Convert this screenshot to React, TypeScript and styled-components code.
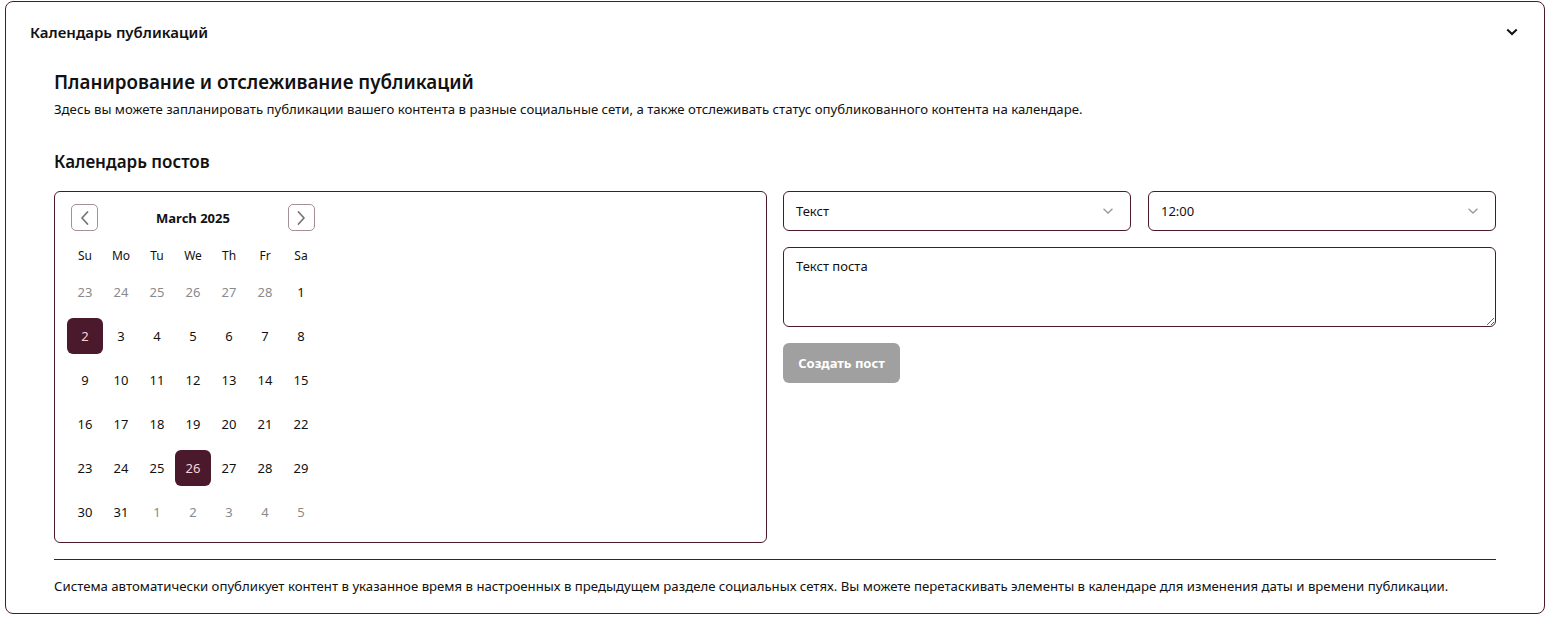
import React from "react";
import styled, { createGlobalStyle } from "styled-components";

const MAROON = "#4a1a2c";

const Global = createGlobalStyle`
  html, body { margin: 0; padding: 0; background: #fff; }
  body { font-family: "Noto Sans", "Open Sans", Arial, sans-serif; color: #111; }
  * { box-sizing: border-box; }
`;

const Page = styled.div`
  padding: 1px 9px 8px 5px;
`;

const Card = styled.section`
  border: 1px solid ${MAROON};
  border-radius: 8px;
  background: #fff;
`;

const CardHeader = styled.header`
  height: 59px;
  display: flex;
  align-items: center;
  justify-content: space-between;
  padding: 0 24px;
`;

const CardTitle = styled.h2`
  margin: 0;
  font-size: 15px;
  font-weight: 600;
  color: #111;
`;

const Toggle = styled.span`
  display: flex;
  align-items: center;
  margin-right: 2px;
  color: #111;
`;

const Body = styled.div`
  padding: 9px 48px 18px;
  display: flex;
  flex-direction: column;
`;

const Title = styled.h1`
  margin: 0;
  font-size: 18.8px;
  line-height: 24px;
  font-weight: 600;
`;

const Lead = styled.p`
  margin: 6px 0 0;
  font-size: 13.2px;
  line-height: 18px;
`;

const SubTitle = styled.h3`
  margin: 33px 0 18px;
  font-size: 17px;
  line-height: 22px;
  font-weight: 600;
`;

const Columns = styled.div`
  display: grid;
  grid-template-columns: 1fr 1fr;
  column-gap: 16px;
  align-items: start;
`;

const CalendarBox = styled.div`
  border: 1px solid ${MAROON};
  border-radius: 6px;
  height: 352px;
  padding: 12px 12px 7px;
`;

const Month = styled.div`
  width: 252px;
`;

const Caption = styled.div`
  display: flex;
  align-items: center;
  justify-content: space-between;
  padding: 0 4px;
  height: 27px;
  margin-bottom: 9px;
`;

const NavButton = styled.button`
  width: 27px;
  height: 27px;
  border: 1px solid #a58f99;
  border-radius: 5px;
  background: #fff;
  display: flex;
  align-items: center;
  justify-content: center;
  padding: 0;
  color: #777;
`;

const MonthLabel = styled.span`
  font-size: 13px;
  font-weight: 700;
  color: #111;
`;

const Grid = styled.div`
  display: grid;
  grid-template-columns: repeat(7, 36px);
`;

const WeekDay = styled.div`
  height: 30px;
  display: flex;
  align-items: center;
  justify-content: center;
  font-size: 12px;
  color: #111;
`;

const DayCell = styled.div`
  height: 44px;
  display: flex;
  align-items: center;
  justify-content: center;
`;

const Day = styled.span<{ $muted?: boolean; $selected?: boolean }>`
  width: 36px;
  height: 36px;
  border-radius: 6px;
  display: flex;
  align-items: center;
  justify-content: center;
  font-size: 13px;
  color: ${(p) => (p.$selected ? "#f4d3df" : p.$muted ? "#8a8a8a" : "#111")};
  background: ${(p) => (p.$selected ? MAROON : "transparent")};
`;

const Form = styled.div`
  display: flex;
  flex-direction: column;
  gap: 16px;
`;

const SelectRow = styled.div`
  display: grid;
  grid-template-columns: 1fr 1fr;
  column-gap: 17px;
`;

const Select = styled.div`
  height: 40px;
  border: 1px solid ${MAROON};
  border-radius: 6px;
  display: flex;
  align-items: center;
  justify-content: space-between;
  padding: 0 16px 0 12px;
  font-size: 13px;
  color: #111;
`;

const Chevron = styled.span`
  display: flex;
  color: #999;
`;

const TextArea = styled.textarea`
  height: 80px;
  border: 1px solid ${MAROON};
  border-radius: 6px;
  padding: 9px 12px;
  font-family: inherit;
  font-size: 13px;
  color: #111;
  resize: vertical;
  outline: none;
  display: block;
  width: 100%;
`;

const SubmitButton = styled.button`
  align-self: flex-start;
  width: 117px;
  height: 40px;
  border: none;
  border-radius: 6px;
  background: #a0a0a0;
  color: #fff;
  font-family: inherit;
  font-size: 13px;
  font-weight: 700;
`;

const Divider = styled.hr`
  margin: 16px 0 0;
  border: none;
  border-top: 1px solid ${MAROON};
`;

const Note = styled.p`
  margin: 17px 0 0;
  font-size: 13.2px;
  line-height: 18px;
`;

const ChevronDown = ({ size = 12, w = 2 }: { size?: number; w?: number }) => (
  <svg width={size} height={size} viewBox="0 0 12 12" fill="none">
    <path d="M2 4.2 L6 8 L10 4.2" stroke="currentColor" strokeWidth={w} strokeLinecap="square" />
  </svg>
);

const Arrow = ({ dir }: { dir: "left" | "right" }) => (
  <svg width="14" height="16" viewBox="0 0 14 16" fill="none">
    <path
      d={dir === "left" ? "M9.5 2 L4 8 L9.5 14" : "M4.5 2 L10 8 L4.5 14"}
      stroke="currentColor"
      strokeWidth="1.8"
      strokeLinecap="round"
      strokeLinejoin="round"
    />
  </svg>
);

type D = { n: number; muted?: boolean; selected?: boolean };

const weeks: D[][] = [
  [23, 24, 25, 26, 27, 28].map((n) => ({ n, muted: true })).concat([{ n: 1 }]),
  [2, 3, 4, 5, 6, 7, 8].map((n) => ({ n, selected: n === 2 })),
  [9, 10, 11, 12, 13, 14, 15].map((n) => ({ n })),
  [16, 17, 18, 19, 20, 21, 22].map((n) => ({ n })),
  [23, 24, 25, 26, 27, 28, 29].map((n) => ({ n, selected: n === 26 })),
  [{ n: 30 }, { n: 31 }, ...[1, 2, 3, 4, 5].map((n) => ({ n, muted: true }))],
];

const weekdays = ["Su", "Mo", "Tu", "We", "Th", "Fr", "Sa"];

export default function App() {
  return (
    <Page>
      <Global />
      <Card>
        <CardHeader>
          <CardTitle>Календарь публикаций</CardTitle>
          <Toggle>
            <ChevronDown size={12} w={2} />
          </Toggle>
        </CardHeader>
        <Body>
          <Title>Планирование и отслеживание публикаций</Title>
          <Lead>
            Здесь вы можете запланировать публикации вашего контента в разные социальные сети, а также отслеживать статус опубликованного контента на календаре.
          </Lead>
          <SubTitle>Календарь постов</SubTitle>
          <Columns>
            <CalendarBox>
              <Month>
                <Caption>
                  <NavButton aria-label="Previous month">
                    <Arrow dir="left" />
                  </NavButton>
                  <MonthLabel>March 2025</MonthLabel>
                  <NavButton aria-label="Next month">
                    <Arrow dir="right" />
                  </NavButton>
                </Caption>
                <Grid>
                  {weekdays.map((w) => (
                    <WeekDay key={w}>{w}</WeekDay>
                  ))}
                  {weeks.flat().map((d, i) => (
                    <DayCell key={i}>
                      <Day $muted={d.muted} $selected={d.selected}>
                        {d.n}
                      </Day>
                    </DayCell>
                  ))}
                </Grid>
              </Month>
            </CalendarBox>
            <Form>
              <SelectRow>
                <Select>
                  <span>Текст</span>
                  <Chevron>
                    <ChevronDown size={12} w={1.3} />
                  </Chevron>
                </Select>
                <Select>
                  <span>12:00</span>
                  <Chevron>
                    <ChevronDown size={12} w={1.3} />
                  </Chevron>
                </Select>
              </SelectRow>
              <TextArea defaultValue="Текст поста" />
              <SubmitButton>Создать пост</SubmitButton>
            </Form>
          </Columns>
          <Divider />
          <Note>
            Система автоматически опубликует контент в указанное время в настроенных в предыдущем разделе социальных сетях. Вы можете перетаскивать элементы в календаре для изменения даты и времени публикации.
          </Note>
        </Body>
      </Card>
    </Page>
  );
}
